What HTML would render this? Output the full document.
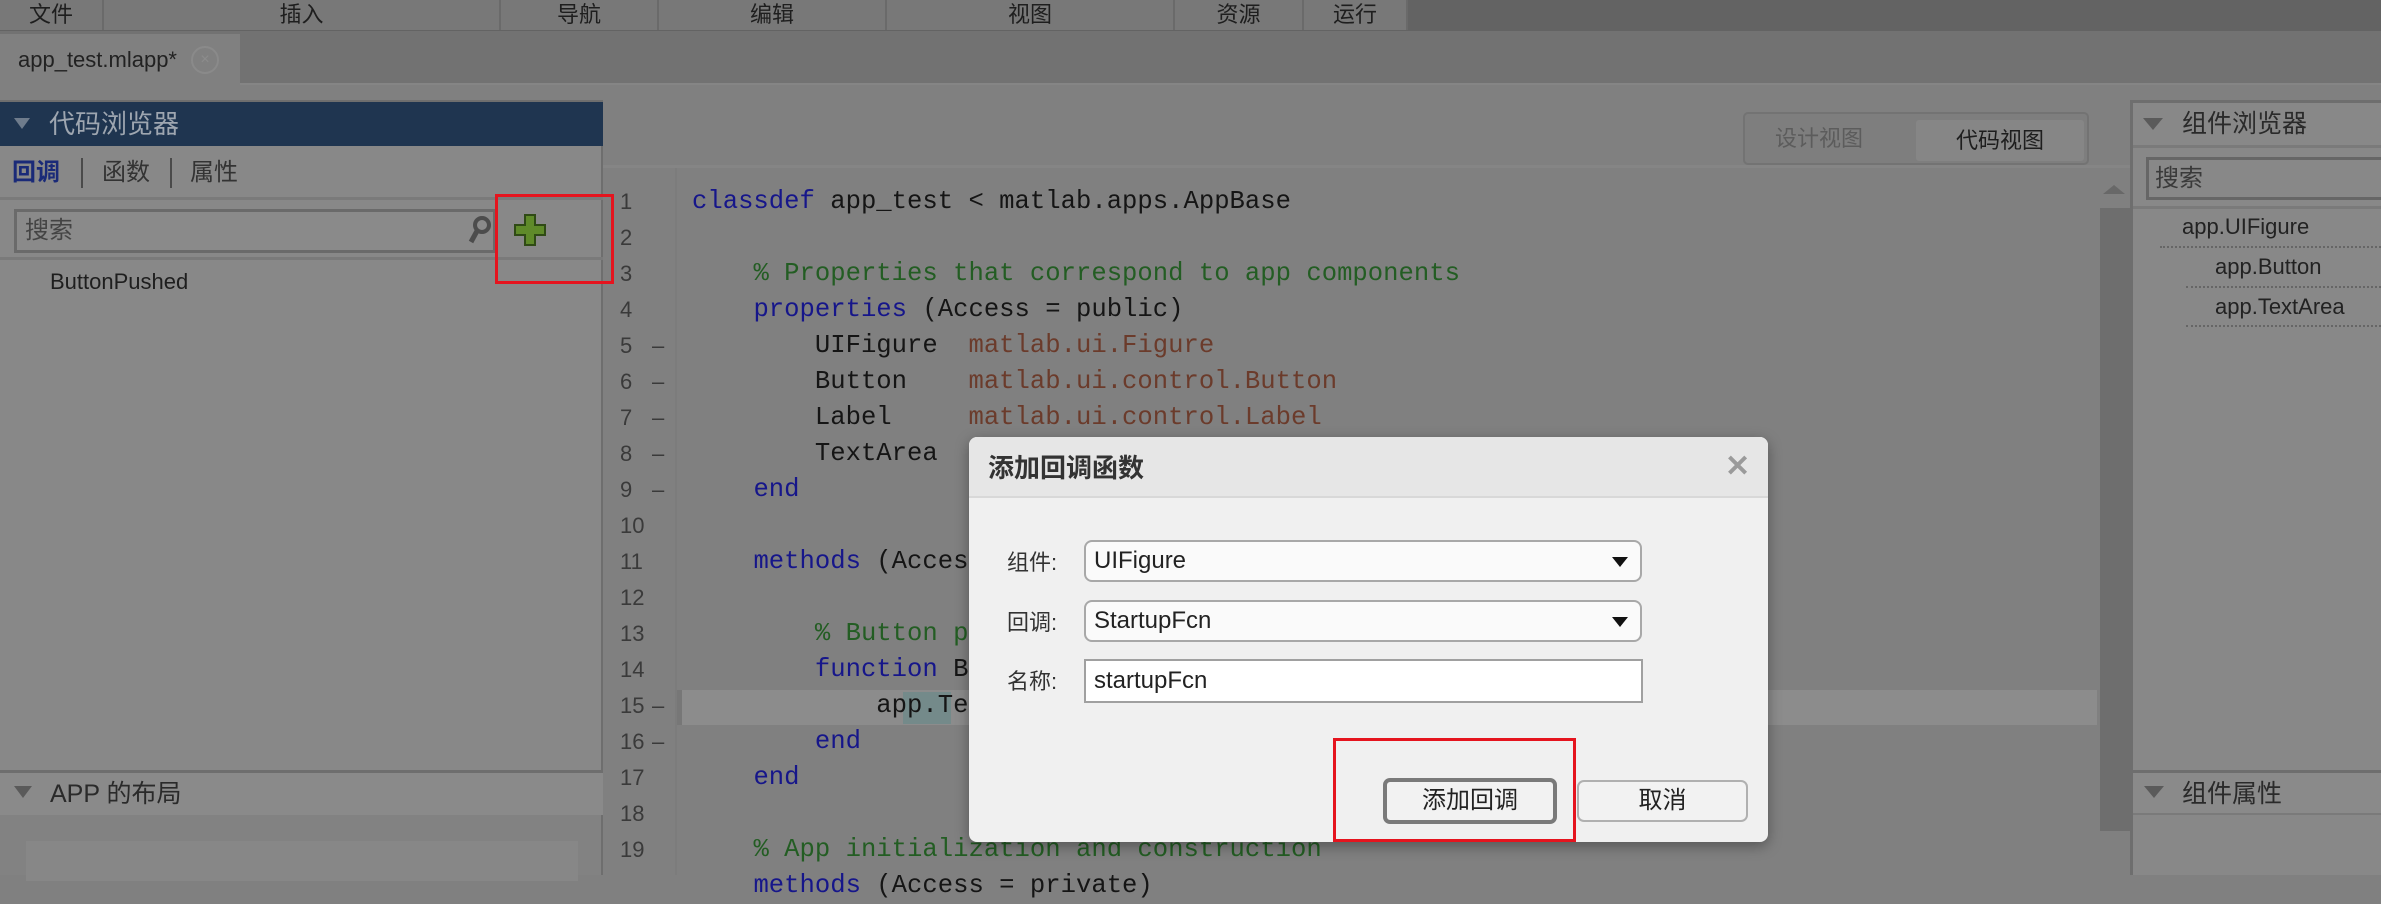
<!DOCTYPE html>
<html><head><meta charset="utf-8">
<style>
*{margin:0;padding:0;box-sizing:border-box}
body{width:2381px;height:875px;overflow:hidden;background:#808080;position:relative;font-family:"Liberation Sans","Noto Sans CJK SC",sans-serif;color:#2a2a2a}
.a{position:absolute}
.menu{left:0;top:0;width:2381px;height:31px;background:#636363}
.mi{top:0;height:30px;background:#787878;border-right:2px solid #6a6a6a;font-size:22px;line-height:30px;text-align:center;color:#1e1e1e}
.code{font-family:"Liberation Mono",monospace;font-size:25.6px;white-space:pre;color:#151515;line-height:36px}
.ln{font-family:"Liberation Sans",sans-serif;font-size:22px;color:#3a3a3a;line-height:36px}
.kw{color:#16168a}.cm{color:#235d23}.ty{color:#6b3b2b}
.dash{font-size:22px;color:#3a3a3a;line-height:36px}
</style></head><body>
<div class="a menu"></div>
<div class="a mi" style="left:0;width:104px">文件</div>
<div class="a mi" style="left:104px;width:397px">插入</div>
<div class="a mi" style="left:501px;width:158px">导航</div>
<div class="a mi" style="left:659px;width:228px">编辑</div>
<div class="a mi" style="left:887px;width:288px">视图</div>
<div class="a mi" style="left:1175px;width:129px">资源</div>
<div class="a mi" style="left:1304px;width:104px">运行</div>
<!-- tab bar -->
<div class="a" style="left:0;top:31px;width:2381px;height:54px;background:#727272;border-bottom:2px solid #858585"></div>
<div class="a" style="left:0;top:34px;width:240px;height:52px;background:#808080;font-size:22px;line-height:52px;padding-left:18px;color:#222">app_test.mlapp*</div>
<div class="a" style="left:191px;top:46px;width:28px;height:28px;border:2px solid #8a8a8a;border-radius:50%;color:#8c8c8c;font-size:16px;text-align:center;line-height:24px">×</div>
<!-- left panel -->
<div class="a" style="left:0;top:100px;width:603px;height:775px;background:#888;border-right:2px solid #6e6e6e;border-top:3px solid #6e6e6e"></div>
<div class="a" style="left:0;top:102px;width:603px;height:44px;background:#1f3550"></div>
<div class="a" style="left:14px;top:118px;width:0;height:0;border-left:8px solid transparent;border-right:8px solid transparent;border-top:11px solid #6f7c8c"></div>
<div class="a" style="left:49px;top:104px;font-size:26px;line-height:40px;color:#9ea6b0">代码浏览器</div>
<div class="a" style="left:12px;top:155px;font-size:24px;line-height:36px;color:#1a2a78;font-weight:bold">回调</div>
<div class="a" style="left:81px;top:158px;width:2px;height:30px;background:#4a4a4a"></div>
<div class="a" style="left:102px;top:155px;font-size:24px;line-height:36px;color:#333">函数</div>
<div class="a" style="left:170px;top:158px;width:2px;height:30px;background:#4a4a4a"></div>
<div class="a" style="left:190px;top:155px;font-size:24px;line-height:36px;color:#333">属性</div>
<div class="a" style="left:0;top:197px;width:603px;height:3px;background:#7a7a7a"></div>
<div class="a" style="left:14px;top:209px;width:482px;height:44px;border:3px solid #6a6a6a;background:#8a8a8a;font-size:24px;line-height:38px;padding-left:8px;color:#444">搜索</div>
<svg class="a" style="left:464px;top:214px" width="30" height="34" viewBox="0 0 30 34"><circle cx="18" cy="11" r="7" fill="none" stroke="#4c4c4c" stroke-width="4"/><line x1="13" y1="17" x2="7" y2="28" stroke="#4c4c4c" stroke-width="5"/></svg>
<svg class="a" style="left:513px;top:213px" width="36" height="36" viewBox="0 0 36 36"><path d="M12 2h10v10h10v10H22v10H12V22H2V12h10z" fill="#5f8a2a" stroke="#2f4a15" stroke-width="2"/></svg>
<div class="a" style="left:0;top:257px;width:603px;height:3px;background:#7a7a7a"></div>
<div class="a" style="left:50px;top:264px;font-size:22px;line-height:36px;color:#1e1e1e">ButtonPushed</div>
<div class="a" style="left:495px;top:194px;width:119px;height:90px;border:3px solid #e5141e"></div>
<div class="a" style="left:0;top:770px;width:603px;height:3px;background:#6e6e6e"></div>
<div class="a" style="left:0;top:773px;width:603px;height:42px;background:#8a8a8a"></div>
<div class="a" style="left:14px;top:786px;width:0;height:0;border-left:9px solid transparent;border-right:9px solid transparent;border-top:12px solid #5a5a5a"></div>
<div class="a" style="left:50px;top:774px;font-size:25px;line-height:40px;color:#2a2a2a">APP 的布局</div>
<div class="a" style="left:0;top:815px;width:601px;height:60px;background:#828282"></div>
<div class="a" style="left:26px;top:841px;width:552px;height:40px;background:#878787"></div>
<!-- editor toolbar -->
<div class="a" style="left:1743px;top:112px;width:346px;height:53px;border:2px solid #737373;border-radius:5px;background:#7e7e7e"></div>
<div class="a" style="left:1775px;top:118px;font-size:22px;line-height:42px;color:#5c5c5c">设计视图</div>
<div class="a" style="left:1916px;top:120px;width:168px;height:41px;background:#868686;border-radius:3px;font-size:22px;line-height:41px;text-align:center;color:#1e1e1e">代码视图</div>
<div class="a" style="left:603px;top:165px;width:1529px;height:3px;background:#858585"></div>
<!-- gutter -->
<div class="a" style="left:675px;top:168px;width:2px;height:707px;background:#7c7c7c"></div>
<div class="a" style="left:677px;top:690px;width:1420px;height:35px;background:#8c8c8c"></div>
<div class="a" style="left:677px;top:690px;width:5px;height:35px;background:#777"></div>
<div class="a" style="left:903px;top:692px;width:48px;height:32px;background:#748a8a"></div>
<div class="a ln" style="left:620px;top:184px">1<br>2<br>3<br>4<br>5<br>6<br>7<br>8<br>9<br>10<br>11<br>12<br>13<br>14<br>15<br>16<br>17<br>18<br>19</div>
<div class="a dash" style="left:652px;top:328px">–<br>–<br>–<br>–<br>–<br><br><br><br><br><br>–<br>–</div>
<div class="a code" style="left:692px;top:184px"><span class="kw">classdef</span> app_test &lt; matlab.apps.AppBase

    <span class="cm">% Properties that correspond to app components</span>
    <span class="kw">properties</span> (Access = public)
        UIFigure  <span class="ty">matlab.ui.Figure</span>
        Button    <span class="ty">matlab.ui.control.Button</span>
        Label     <span class="ty">matlab.ui.control.Label</span>
        TextArea  <span class="ty">matlab.ui.control.TextArea</span>
    <span class="kw">end</span>

    <span class="kw">methods</span> (Access = private)

        <span class="cm">% Button pushed function: Button</span>
        <span class="kw">function</span> ButtonPushed(app, event)
            app.TextArea.Value = 'Hello';
        <span class="kw">end</span>
    <span class="kw">end</span>

    <span class="cm">% App initialization and construction</span>
    <span class="kw">methods</span> (Access = private)</div>
<!-- scrollbar -->
<div class="a" style="left:2103px;top:185px;width:0;height:0;border-left:11px solid transparent;border-right:11px solid transparent;border-bottom:9px solid #686868"></div>
<div class="a" style="left:2100px;top:208px;width:30px;height:623px;background:#6e6e6e"></div>
<!-- right panel -->
<div class="a" style="left:2130px;top:100px;width:251px;height:775px;background:#888;border-left:3px solid #6e6e6e;border-top:3px solid #6e6e6e"></div>
<div class="a" style="left:2143px;top:118px;width:0;height:0;border-left:10px solid transparent;border-right:10px solid transparent;border-top:12px solid #5a5a5a"></div>
<div class="a" style="left:2182px;top:104px;font-size:25px;line-height:40px;color:#2a2a2a">组件浏览器</div>
<div class="a" style="left:2133px;top:145px;width:248px;height:3px;background:#7a7a7a"></div>
<div class="a" style="left:2146px;top:157px;width:240px;height:43px;border:3px solid #666;font-size:24px;line-height:37px;padding-left:6px;color:#3a3a3a">搜索</div>
<div class="a" style="left:2133px;top:206px;width:248px;height:3px;background:#7a7a7a"></div>
<div class="a" style="left:2182px;top:209px;font-size:22px;line-height:36px;color:#222">app.UIFigure</div>
<div class="a" style="left:2160px;top:246px;width:221px;border-top:2px dotted #666"></div>
<div class="a" style="left:2215px;top:249px;font-size:22px;line-height:36px;color:#222">app.Button</div>
<div class="a" style="left:2186px;top:286px;width:195px;border-top:2px dotted #666"></div>
<div class="a" style="left:2215px;top:289px;font-size:22px;line-height:36px;color:#222">app.TextArea</div>
<div class="a" style="left:2186px;top:325px;width:195px;border-top:2px dotted #666"></div>
<div class="a" style="left:2133px;top:770px;width:248px;height:3px;background:#6e6e6e"></div>
<div class="a" style="left:2133px;top:773px;width:248px;height:42px;background:#8a8a8a;border-bottom:2px solid #7a7a7a"></div>
<div class="a" style="left:2144px;top:786px;width:0;height:0;border-left:10px solid transparent;border-right:10px solid transparent;border-top:12px solid #5a5a5a"></div>
<div class="a" style="left:2182px;top:774px;font-size:25px;line-height:40px;color:#2a2a2a">组件属性</div>
<!-- dialog -->
<div class="a" style="left:969px;top:437px;width:799px;height:405px;background:#f0f0f0;border-radius:8px;box-shadow:0 4px 14px rgba(0,0,0,.35);overflow:hidden">
 <div style="height:61px;background:#e6e6e6;border-bottom:2px solid #d8d8d8"></div>
</div>
<div class="a" style="left:988px;top:448px;font-size:26px;line-height:40px;font-weight:bold;color:#333">添加回调函数</div>
<div class="a" style="left:1725px;top:448px;font-size:30px;line-height:38px;color:#9a9a9a;font-weight:bold">✕</div>
<div class="a" style="left:1007px;top:546px;font-size:22px;line-height:34px;color:#333">组件:</div>
<div class="a" style="left:1007px;top:606px;font-size:22px;line-height:34px;color:#333">回调:</div>
<div class="a" style="left:1007px;top:665px;font-size:22px;line-height:34px;color:#333">名称:</div>
<div class="a" style="left:1084px;top:540px;width:558px;height:42px;border:2px solid #a8a8a8;border-radius:8px;background:#fafafa;font-size:24px;line-height:38px;padding-left:8px;color:#222">UIFigure</div>
<div class="a" style="left:1612px;top:557px;width:0;height:0;border-left:8px solid transparent;border-right:8px solid transparent;border-top:10px solid #111"></div>
<div class="a" style="left:1084px;top:600px;width:558px;height:42px;border:2px solid #a8a8a8;border-radius:8px;background:#fafafa;font-size:24px;line-height:38px;padding-left:8px;color:#222">StartupFcn</div>
<div class="a" style="left:1612px;top:617px;width:0;height:0;border-left:8px solid transparent;border-right:8px solid transparent;border-top:10px solid #111"></div>
<div class="a" style="left:1084px;top:659px;width:559px;height:44px;border:2px solid #a0a0a0;background:#fff;font-size:24px;line-height:40px;padding-left:8px;color:#222">startupFcn</div>
<div class="a" style="left:1383px;top:778px;width:174px;height:46px;border:4px solid #7a7a7a;border-radius:7px;background:#f2f2f2;font-size:24px;line-height:38px;text-align:center;color:#222">添加回调</div>
<div class="a" style="left:1577px;top:780px;width:171px;height:42px;border:2px solid #b0b0b0;border-radius:7px;background:#f2f2f2;font-size:24px;line-height:38px;text-align:center;color:#222">取消</div>
<div class="a" style="left:1333px;top:738px;width:243px;height:104px;border:3px solid #e5141e"></div>
</body></html>
